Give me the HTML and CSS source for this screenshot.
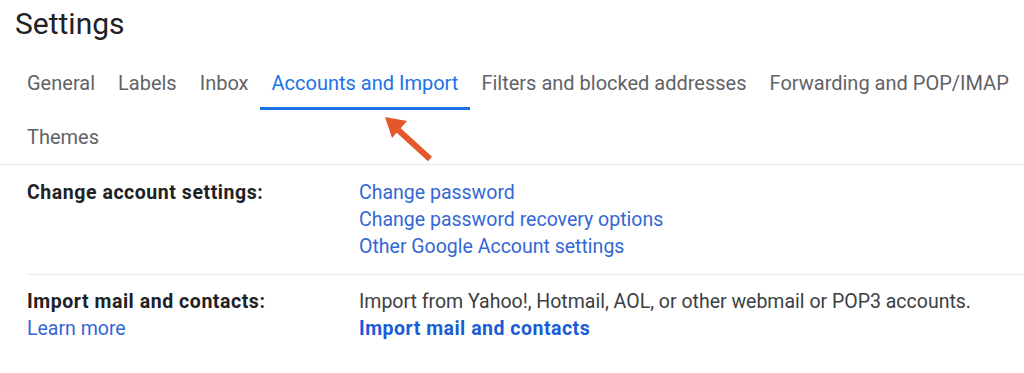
FILE: index.html
```html
<!DOCTYPE html>
<html lang="en">
<head>
<meta charset="utf-8">
<title>Settings</title>
<link rel="stylesheet" href="styles.css">
</head>
<body>
<div class="page">
  <h1 class="title">Settings</h1>
  <nav class="tabs">
    <a class="tab">General</a>
    <a class="tab">Labels</a>
    <a class="tab">Inbox</a>
    <a class="tab active">Accounts and Import
      <svg class="arrow" width="60" height="56" viewBox="0 0 60 56">
        <line x1="50" y1="50" x2="16" y2="19" stroke="#e4572b" stroke-width="6"/>
        <polygon points="5,8 27,12 12,29" fill="#e4572b"/>
      </svg>
    </a>
    <a class="tab">Filters and blocked addresses</a>
    <a class="tab">Forwarding and POP/IMAP</a>
    <a class="tab">Themes</a>
  </nav>
  <div class="sections">
    <section class="row">
      <div class="label"><b>Change account settings:</b></div>
      <div class="value">
        <a class="link">Change password</a>
        <a class="link">Change password recovery options</a>
        <a class="link">Other Google Account settings</a>
      </div>
    </section>
    <section class="row">
      <div class="label"><b>Import mail and contacts:</b><a class="link">Learn more</a></div>
      <div class="value">
        <span class="text">Import from Yahoo!, Hotmail, AOL, or other webmail or POP3 accounts.</span>
        <a class="link strong">Import mail and contacts</a>
      </div>
    </section>
  </div>
</div>
</body>
</html>
```

FILE: styles.css
```css
html, body {
  margin: 0;
  padding: 0;
  background: #ffffff;
}
body {
  font-family: Roboto, "Liberation Sans", Arial, sans-serif;
  color: #202124;
  width: 1024px;
  height: 373px;
  overflow: hidden;
}
.title {
  margin: 0 0 8px 0;
  padding-left: 15px;
  font-size: 30px;
  font-weight: 400;
  line-height: 48px;
  color: #202124;
}
.tabs {
  display: flex;
  flex-wrap: wrap;
  padding-left: 15.5px;
  border-bottom: 1px solid #e8eaed;
}
.tab {
  position: relative;
  display: block;
  padding: 16px 11.5px 13px 11.5px;
  font-size: 20px;
  line-height: 22px;
  color: #5f6368;
  border-bottom: 3px solid transparent;
  white-space: nowrap;
}
.tab.active {
  color: #1a73e8;
  border-bottom-color: #1a73e8;
}
.arrow {
  position: absolute;
  left: 120px;
  top: 53px;
  z-index: 2;
}
.sections {
  padding-left: 27px;
}
.row {
  display: grid;
  grid-template-columns: 332px 1fr;
  font-size: 19.5px;
  line-height: 27px;
  padding: 14px 0 14px 0;
  border-bottom: 1px solid #e8eaed;
}
.row + .row {
  padding-top: 13px;
}
.row:last-child {
  border-bottom: none;
}
.label, .value {
  display: flex;
  flex-direction: column;
  align-items: flex-start;
}
.label b {
  font-weight: 700;
  letter-spacing: 0.55px;
  color: #202124;
}
.text {
  color: #3c4043;
}
.link {
  color: #3367d6;
  text-decoration: none;
}
.link.strong {
  font-weight: 700;
  letter-spacing: 0.5px;
  color: #1a5cd6;
}
```
